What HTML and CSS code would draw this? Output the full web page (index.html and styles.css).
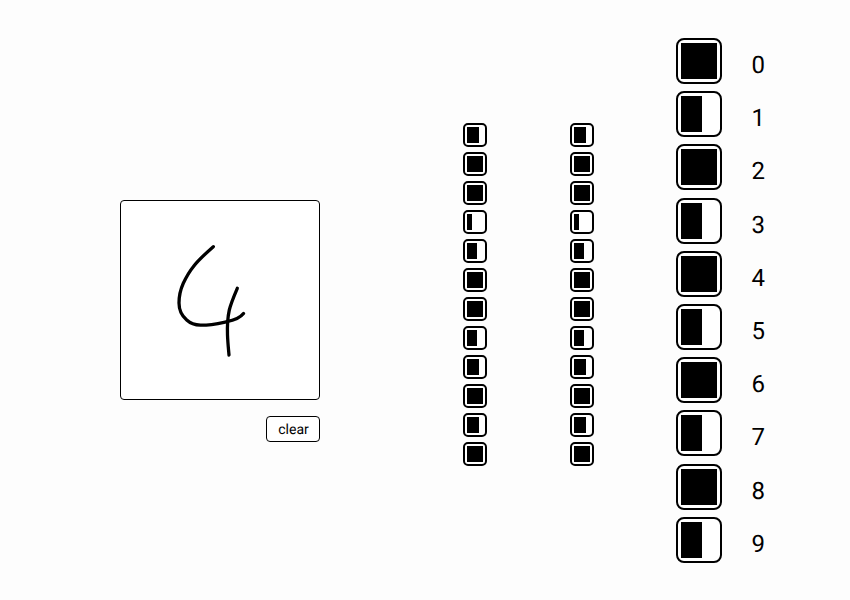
FILE: index.html
```html
<!DOCTYPE html>
<html lang="en">
<head>
<meta charset="utf-8">
<title>Digit recogniser</title>
<link rel="stylesheet" href="styles.css">
</head>
<body>
<main class="app">
  <section class="input">
    <div class="canvas">
      <svg class="drawing" width="198" height="198" viewBox="121 201 198 198" aria-hidden="true">
        <path d="M213.3 246.7C205 254 197.5 261 193.3 266.7C189 272 186 277.5 183.3 283.3C180.5 289.5 179 296 179 303C179 310 182 316 186.7 320C190.5 323.5 195 325 200.5 325.2C209 325.5 218 323.5 226.7 321.7C233 320.5 240 318 243.5 313.5"/>
        <path d="M237.3 288.3C234 296 231 303 229.3 310C227.5 318 227.2 326 227.5 335C227.8 343 228.5 349 229 355"/>
      </svg>
    </div>
    <button class="clear" type="button">clear</button>
  </section>
  <section class="layer first">
    <div class="unit small"><span class="bar" style="width:75%"></span></div>
    <div class="unit small"><span class="bar" style="width:100%"></span></div>
    <div class="unit small"><span class="bar" style="width:100%"></span></div>
    <div class="unit small"><span class="bar" style="width:31%"></span></div>
    <div class="unit small"><span class="bar" style="width:62%"></span></div>
    <div class="unit small"><span class="bar" style="width:100%"></span></div>
    <div class="unit small"><span class="bar" style="width:100%"></span></div>
    <div class="unit small"><span class="bar" style="width:62%"></span></div>
    <div class="unit small"><span class="bar" style="width:75%"></span></div>
    <div class="unit small"><span class="bar" style="width:100%"></span></div>
    <div class="unit small"><span class="bar" style="width:75%"></span></div>
    <div class="unit small"><span class="bar" style="width:100%"></span></div>
  </section>
  <section class="layer second">
    <div class="unit small"><span class="bar" style="width:75%"></span></div>
    <div class="unit small"><span class="bar" style="width:100%"></span></div>
    <div class="unit small"><span class="bar" style="width:100%"></span></div>
    <div class="unit small"><span class="bar" style="width:31%"></span></div>
    <div class="unit small"><span class="bar" style="width:62%"></span></div>
    <div class="unit small"><span class="bar" style="width:100%"></span></div>
    <div class="unit small"><span class="bar" style="width:100%"></span></div>
    <div class="unit small"><span class="bar" style="width:62%"></span></div>
    <div class="unit small"><span class="bar" style="width:75%"></span></div>
    <div class="unit small"><span class="bar" style="width:100%"></span></div>
    <div class="unit small"><span class="bar" style="width:75%"></span></div>
    <div class="unit small"><span class="bar" style="width:100%"></span></div>
  </section>
  <section class="output">
    <div class="row"><div class="unit large"><span class="bar" style="width:100%"></span></div><span class="digit">0</span></div>
    <div class="row"><div class="unit large"><span class="bar" style="width:58%"></span></div><span class="digit">1</span></div>
    <div class="row"><div class="unit large"><span class="bar" style="width:100%"></span></div><span class="digit">2</span></div>
    <div class="row"><div class="unit large"><span class="bar" style="width:58%"></span></div><span class="digit">3</span></div>
    <div class="row"><div class="unit large"><span class="bar" style="width:100%"></span></div><span class="digit">4</span></div>
    <div class="row"><div class="unit large"><span class="bar" style="width:58%"></span></div><span class="digit">5</span></div>
    <div class="row"><div class="unit large"><span class="bar" style="width:100%"></span></div><span class="digit">6</span></div>
    <div class="row"><div class="unit large"><span class="bar" style="width:58%"></span></div><span class="digit">7</span></div>
    <div class="row"><div class="unit large"><span class="bar" style="width:100%"></span></div><span class="digit">8</span></div>
    <div class="row"><div class="unit large"><span class="bar" style="width:58%"></span></div><span class="digit">9</span></div>
  </section>
</main>
</body>
</html>
```

FILE: styles.css
```css
* {
  box-sizing: border-box;
}

html,
body {
  margin: 0;
  height: 100%;
  overflow: hidden;
  background: #fdfdfd;
}

body {
  font-family: Roboto, "Liberation Sans", sans-serif;
  color: #000;
  text-rendering: geometricPrecision;
}

.app {
  display: flex;
  align-items: flex-start;
  width: 850px;
  height: 600px;
}

.input {
  display: flex;
  flex-direction: column;
  width: 200px;
  margin: 200px 0 0 120px;
}

.canvas {
  width: 200px;
  height: 200px;
  border: 1px solid #000;
  border-radius: 4px;
  background: #fff;
  overflow: hidden;
}

.drawing {
  display: block;
}

.drawing path {
  fill: none;
  stroke: #000;
  stroke-width: 3.3;
  stroke-linecap: round;
  stroke-linejoin: round;
}

.clear {
  align-self: flex-end;
  width: 54px;
  height: 26px;
  margin-top: 16px;
  padding: 1px 0 0 1px;
  border: 1px solid #000;
  border-radius: 4px;
  background: #fff;
  color: #000;
  font: 14px Roboto, "Liberation Sans", sans-serif;
  text-rendering: geometricPrecision;
}

.layer {
  display: flex;
  flex-direction: column;
  gap: 5px;
  margin-top: 123px;
}

.first {
  margin-left: 143px;
}

.second {
  margin-left: 83px;
}

.unit {
  display: flex;
  flex: none;
  border: 2px solid #000;
  background: #fff;
}

.small {
  width: 24px;
  height: 24px;
  padding: 2px;
  border-radius: 5px;
}

.large {
  width: 46px;
  height: 46px;
  padding: 3px;
  border-radius: 8px;
}

.bar {
  display: block;
  height: 100%;
  background: #000;
}

.output {
  display: flex;
  flex-direction: column;
  gap: 7.2px;
  width: 100px;
  margin: 38px 0 0 82px;
}

.row {
  display: flex;
  align-items: flex-start;
  gap: 29.5px;
  height: 46px;
}

.digit {
  padding-top: 8px;
  font-size: 24px;
  line-height: 38px;
}
```
